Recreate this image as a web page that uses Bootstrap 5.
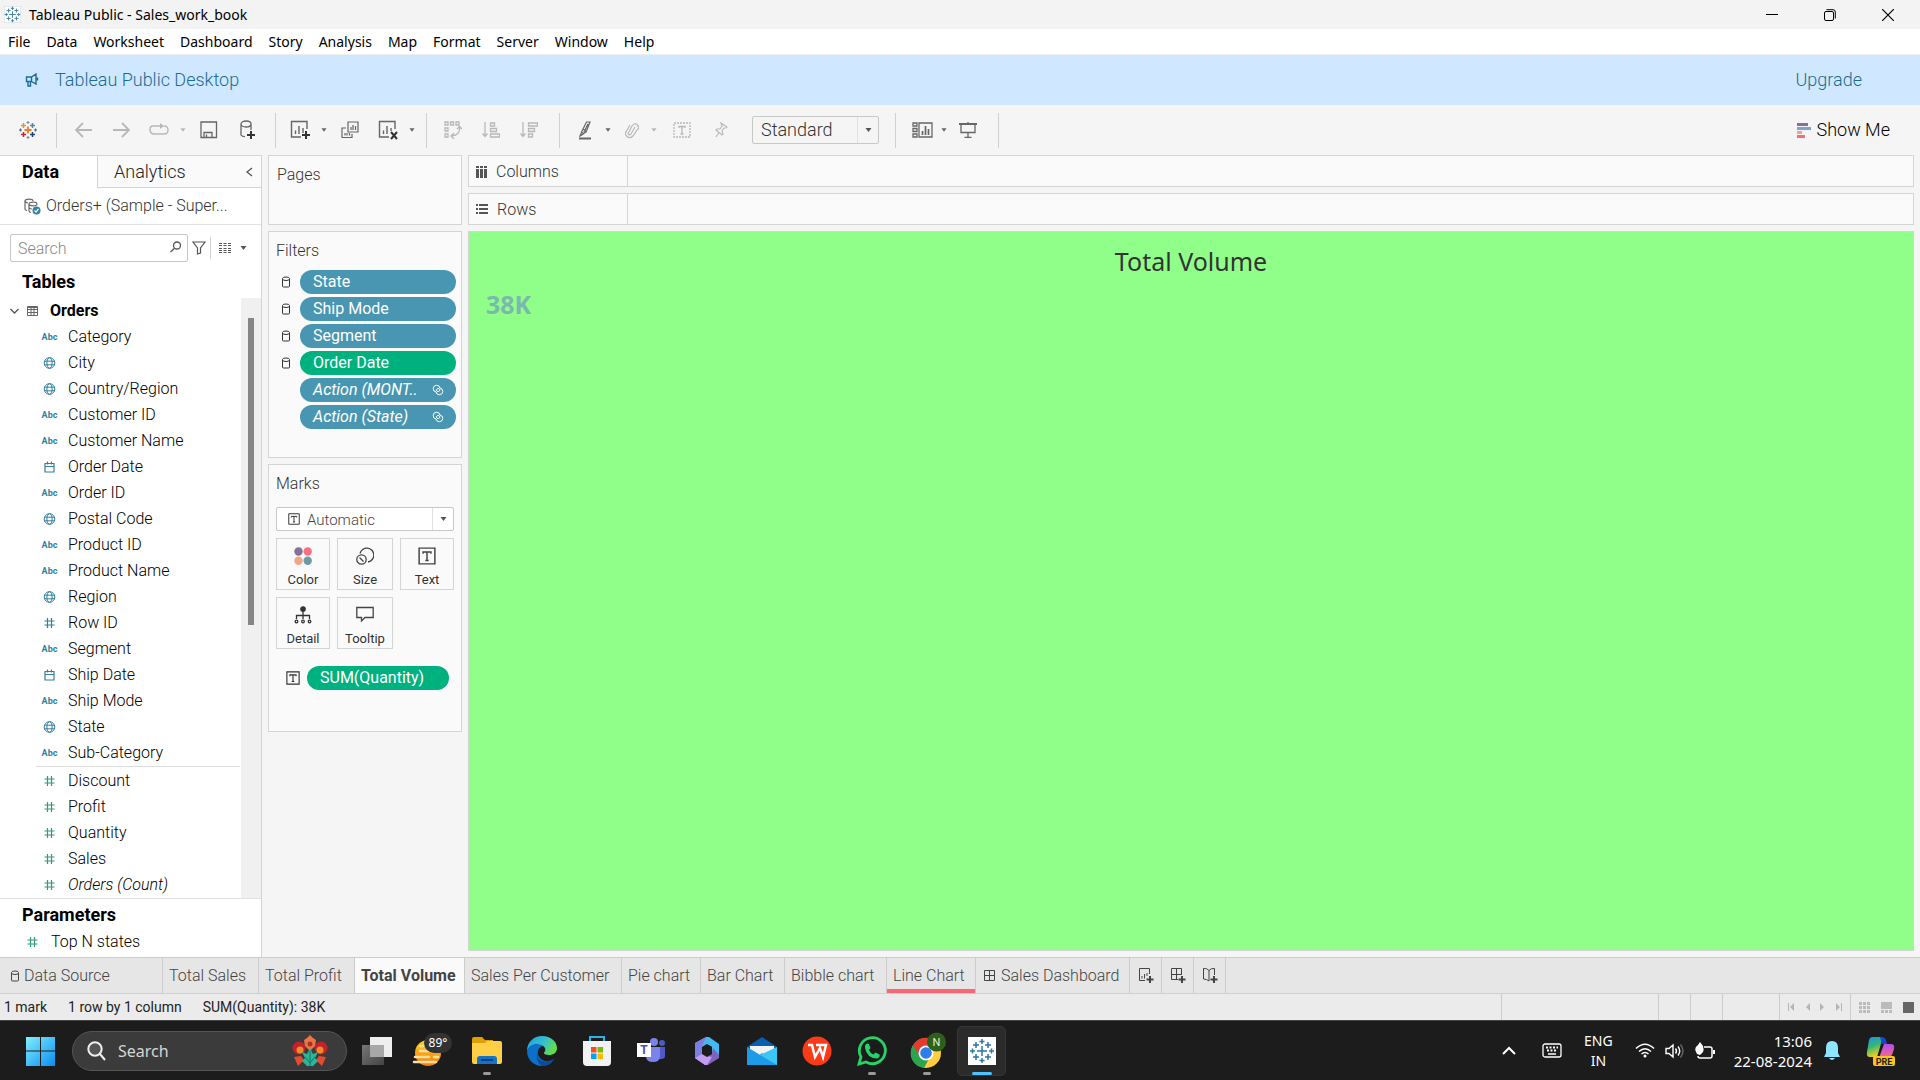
<!DOCTYPE html>
<html lang="en">
<head>
<meta charset="utf-8">
<meta name="viewport" content="width=device-width, initial-scale=1">
<title>Tableau Public - Sales_work_book</title>
<link rel="stylesheet" href="https://cdn.jsdelivr.net/npm/bootstrap@5.3.0/dist/css/bootstrap.min.css">
<style>
:root{--ui:"Roboto","Liberation Sans",sans-serif;--win:"Noto Sans","Open Sans",sans-serif;--line:#d4d4d4;--dim:#4996b2;--mea:#00b180}
body{font-family:var(--ui);font-size:16px;font-weight:300;line-height:24px;color:#000;background:#f5f5f5;min-height:100vh;overflow-x:hidden}
button,input,select{font-family:inherit;font-weight:inherit;font-style:inherit;color:inherit}
button{background:none;border:0;padding:0}
a{text-decoration:none;color:inherit}
svg{display:block;flex:none}
h1,h2,h3{margin:0;line-height:inherit}
.winbar{background:#f3f3f3;height:29px;font:14px/28px var(--win);padding-right:3px}
.winbtn{width:58px;height:29px}
.menus{background:#fff;height:26px;border-bottom:1px solid #eee;font:14px/26px var(--win);gap:16px}
.banner{background:#cfe8ff;height:50px;color:#1b6d93;font-size:18px}
.tools{height:50px;color:#666}
.tgroup{gap:2px}
.tb{width:36px;height:36px;display:flex;align-items:center;justify-content:center}
.tb.tw{width:44px}
.tc{width:13px;height:36px;margin-left:-3px;display:flex;align-items:center;justify-content:center}
.off{color:#b8b8b8}
.rule{width:1px;height:35px;background:#d0d0d0}
.drop{position:relative}
.drop select{appearance:none;width:100%;height:100%;border:1px solid #c8c8c8;border-radius:2px;color:#333}
.drop .arr{position:absolute;right:0;top:1px;bottom:1px;width:22px;border-left:1px solid #e0e0e0;display:flex;align-items:center;justify-content:center;pointer-events:none;color:#555}
.fit{width:127px;height:28px}.fit select{background:#f5f5f5;font-size:18px;padding:0 0 0 8px}
.marktype{height:24px}.marktype select{background:#fff;font-size:15px;color:#444;padding:0 0 0 30px}
.marktype>svg{position:absolute;left:12px;top:6px;pointer-events:none}
.showme{font-size:18px;margin-right:30px;gap:6px}
.datapane{width:262px;background:#fff;border-right:1px solid var(--line);border-top:1px solid var(--line)}
.ptab{height:32px;font-size:18px}
.ptab.cur{width:97px;font-weight:700;color:#000;padding:0 0 0 22px}
.ptab.alt{background:#fafafa;border-left:1px solid var(--line);border-bottom:1px solid var(--line);color:#222}
.src{height:37px;border-bottom:1px solid #e2e2e2;color:#333}
.findrow{padding:9px 10px 0;gap:4px}
.find{width:178px;height:28px;position:relative}
.find input{width:100%;height:100%;border:1px solid #c8c8c8;border-radius:2px;padding:0 28px 0 7px;outline:0}
.find input::placeholder{color:#888;opacity:1}
.find svg{position:absolute;right:6px;top:7px;color:#555}
.sec{font-size:18px;font-weight:700;padding-left:22px}
.fields{list-style:none;margin:0;padding:0}
.fields li{height:26px;padding-left:41px;display:flex;align-items:center;line-height:26px}
.fields svg,.abc{margin-right:10px;color:#337f9f}
.abc{width:17px;font-size:9px;font-weight:700;line-height:12px;text-align:center;flex:none}
.fields .m svg{color:#2f9c76}
.split{height:1px;background:#ddd;margin:0 -3px 1px 36px}
.fields .param{height:30px;padding-left:24px}
.track{width:20px;background:#f0f0f0}
.thumb{width:6px;height:307px;background:#868686}
.shelfcol{width:194px}
.pane{background:#fafafa;border:1px solid var(--line);color:#333}
.ptitle{padding-top:3px}
.pill{height:24px;border:0;border-radius:12px;background:var(--dim);color:#fff;font-weight:400;line-height:24px;padding:0 12px 0 13px;display:flex;align-items:center;justify-content:space-between}
.pill.g{background:var(--mea)}
.frow{display:grid;grid-template-columns:24px 156px;height:24px;align-items:center}
.frow>svg{margin-left:5px}
.mbtns{display:grid;grid-template-columns:54px 56px 54px;gap:7px}
.mbtn{height:52px;border:1px solid var(--line);background:#fafafa;font-size:13px;font-weight:400;line-height:18px;color:#333;display:flex;flex-direction:column;align-items:center;padding-top:8px}
.mbtn svg{margin-bottom:6px}
.shelf{height:32px}
.shelfname{width:159px;border-right:1px solid var(--line);gap:9px;padding:2px 0 0 7px}
.viz{background:#8fff8a;border:1px solid var(--line)}
.viz h1{font:25px/34px "Noto Sans",sans-serif;color:#333;text-align:center}
.big{font:bold 25px/32px "Noto Sans",sans-serif;color:#7bb8ad;padding:10px 0 0 1px}
.sheets{height:37px;background:#e6e6e6;border-top:1px solid #ccc;border-bottom:1px solid #d0d0d0;color:#444}
.sheets button{border-right:1px solid #ccc;padding:0 6px;color:#444;text-align:left;white-space:nowrap}
.sheets .cur{background:#fafafa;font-weight:700}
.sheets .red{box-shadow:inset 0 -4px #fb6574}
.sheets .new{width:32px;display:flex;align-items:center;justify-content:center}
.status{height:26px;background:#ebebeb;font-size:14px;font-weight:400;line-height:26px;color:#222}
.facts{gap:21px}
.cell{border-left:1px solid #ccc;height:26px}
.task{height:60px;background:#1c1c1c;border-top:1px solid #444;color:#fff;font:14px/20px var(--win)}
.tsearch{width:275px;height:40px;border-radius:20px;background:#3b3b3b;border:1px solid #555;color:#d8d8d8}
.tsearch input{background:none;border:0;outline:0;width:150px;font-size:16px}
.tsearch input::placeholder{color:#d5d5d5;opacity:1}
.app{width:55px;height:50px;display:flex;align-items:center;justify-content:center;position:relative}
.app.start{width:64px;margin-left:8px}
.app.run::after{content:"";position:absolute;bottom:1px;width:8px;height:3px;border-radius:2px;background:#9a9a9a}
.app.on::before{content:"";position:absolute;inset:0 3px;background:#2b2b2b;border:1px solid #363636;border-radius:5px}
.app.on svg{position:relative}
.app.on::after{width:20px;background:#4cc2ff}
.tray{gap:10px;padding-right:24px}
.clock{font-size:15px;margin:0 2px 0 8px}
</style>
<script src="https://cdn.jsdelivr.net/npm/bootstrap@5.3.0/dist/js/bootstrap.bundle.min.js"></script>
</head>
<body class="d-flex flex-column">
<svg width="0" height="0" class="position-absolute" aria-hidden="true">
<symbol id="i-globe" viewBox="0 0 17 12"><g fill="none" stroke="currentColor"><circle cx="8.500" cy="6" r="5.300"/><ellipse cx="8.500" cy="6" rx="2.600" ry="5.300"/><path d="M3.500 4.200h10M3.500 7.800h10"/></g></symbol>
<symbol id="i-cal" viewBox="0 0 17 12"><path d="M4 2.500h9v8.500H4zM4 5.500h9M6.500 0.500v3M10.500 0.500v3" fill="none" stroke="currentColor" stroke-width="1.200"/></symbol>
<symbol id="i-num" viewBox="0 0 17 12"><path d="M6.500 1v10M10.500 1v10M3.500 4h10M3.500 8h10" fill="none" stroke="currentColor" stroke-width="1.200"/></symbol>
<symbol id="i-car" viewBox="0 0 7 4"><path d="M0.500 0h6L3.500 4z" fill="currentColor"/></symbol>
<symbol id="i-db" viewBox="0 0 10 12"><path d="M1.500 2.500q0-1.500 3.500-1.500t3.500 1.500v7.500q0 1-1 1h-5q-1 0-1-1zM1.500 3q0 1.500 3.500 1.500t3.500-1.500" fill="none" stroke="currentColor"/></symbol>
<symbol id="i-t" viewBox="0 0 16 16"><path d="M1 1h14v14H1z" fill="none" stroke="currentColor" stroke-width="1.300"/><path d="M4.500 6V4.500h7V6M8 4.500v7.500M6.500 12h3" fill="none" stroke="currentColor" stroke-width="1.300"/></symbol>
<symbol id="i-link" viewBox="0 0 12 12"><path d="M4.200 8A3.400 3.400 0 1 1 8 4.300M8 4A3.400 3.400 0 1 1 4 8M4.200 6l2-2 2 2-2 2z" fill="none" stroke="currentColor"/></symbol>
<symbol id="i-tab" viewBox="0 0 26 26"><path d="M13 8v10M8 13h10M13 1v5M10.500 3.500h5M13 20v5M10.500 22.500h5M3.500 10.500v5M1 13h5M22.500 10.500v5M20 13h5M7 4v6M4 7h6M19 4v6M16 7h6M7 16v6M4 19h6M19 16v6M16 19h6" fill="none" stroke="currentColor" stroke-width="1.500"/></symbol>
</svg>

<header>
<div class="winbar d-flex align-items-center">
<div class="d-flex align-items-center flex-grow-1 ps-1"><svg width="17" height="17" viewBox="0 0 26 26" style="color:#3e86ac"><path d="M0 0h26v26H0z" fill="#fff" stroke="#bbb"/><use href="#i-tab"/></svg><span class="ps-2">Tableau Public - Sales_work_book</span></div>
<button class="winbtn" aria-label="Minimize"><svg class="mx-auto" width="12" height="12"><path d="M0 5.500h12" stroke="#000"/></svg></button>
<button class="winbtn" aria-label="Restore"><svg class="mx-auto" width="12" height="12" fill="none" stroke="#000"><rect x="0.500" y="2.500" width="9" height="9" rx="1.500"/><path d="M2.500.7H9q2.300 0 2.300 2.300v6.500"/></svg></button>
<button class="winbtn" aria-label="Close"><svg class="mx-auto" width="12" height="12"><path d="M0 0l12 12M12 0L0 12" stroke="#000" stroke-width="1.200"/></svg></button>
</div>
<nav class="menus d-flex ps-2"><a href="#">File</a><a href="#">Data</a><a href="#">Worksheet</a><a href="#">Dashboard</a><a href="#">Story</a><a href="#">Analysis</a><a href="#">Map</a><a href="#">Format</a><a href="#">Server</a><a href="#">Window</a><a href="#">Help</a></nav>
<div class="banner d-flex align-items-center justify-content-between">
<div class="d-flex align-items-center"><svg class="ms-4 me-3" width="15" height="14" fill="none" stroke="currentColor" stroke-width="1.400"><path d="M2.500 4h5L12 1v10L7.500 8.500h-5zM7.500 4v4.500M4 8.500V13h2.500V8.500M13.500 4.500v3"/></svg><span>Tableau Public Desktop</span></div>
<a href="#" class="me-5" style="padding-right:10px">Upgrade</a>
</div>
<div class="tools d-flex align-items-center" role="toolbar">
<button class="tb ms-2 me-2" aria-label="Start page"><svg class="ms-1" width="18" height="20" viewBox="0 0 18 20" fill="none" stroke-width="1.500"><path d="M9 6.500v7M5.500 10h7" stroke="#eb7a2c" stroke-width="1.800"/><path d="M4.500 3v5M2 5.500h5" stroke="#eb912c"/><path d="M13.500 3v5M11 5.500h5" stroke="#59879b"/><path d="M4.500 12v5M2 14.500h5" stroke="#c72035"/><path d="M13.500 12v5M11 14.500h5" stroke="#1f447e"/><path d="M9 1v3M7.500 2.500h3M9 16v3M7.500 17.500h3" stroke="#7099a6" stroke-width="1.200"/><path d="M1.500 8.500v3M0 10h3M16.500 8.500v3M15 10h3" stroke="#5b6591" stroke-width="1.200"/></svg></button>
<div class="rule ms-1"></div>
<div class="tgroup d-flex ms-2 off" style="margin-right:10px">
<button class="tb" aria-label="Back"><svg width="17" height="16" fill="none" stroke="currentColor" stroke-width="1.800"><path d="M17 8H1M8 1L1 8l7 7"/></svg></button>
<button class="tb" aria-label="Forward"><svg width="17" height="16" fill="none" stroke="currentColor" stroke-width="1.800"><path d="M0 8h16M9 1l7 7-7 7"/></svg></button>
<button class="tb" aria-label="Replay"><svg width="20" height="14" fill="none" stroke="currentColor" stroke-width="1.400"><path d="M12 3H4Q1 3 1 6.500T4 11h11q4 0 4-4t-4-4"/><path d="M11 0l4 3-4 3z" fill="currentColor" stroke="none"/></svg></button><button class="tc" aria-label="Replay options"><svg width="6" height="4"><use href="#i-car"/></svg></button>
<button class="tb" aria-label="Save" style="color:#666"><svg width="18" height="18" fill="none" stroke="currentColor" stroke-width="1.300"><path d="M1 1h15.500v15.500H1zM4 16.500v-5h8v5M6.500 13.500v3"/></svg></button>
<button class="tb" aria-label="New data source" style="color:#666"><svg width="17" height="20" fill="none" stroke="currentColor" stroke-width="1.300"><path d="M2 4c0-4 10-4 10 0s-10 4-10 0v11q1 1.500 4 1.700M12 4v6"/><path d="M12 11v8M8 15h8" stroke="#333" stroke-width="2"/></svg></button>
</div>
<div class="rule"></div>
<div class="tgroup d-flex me-2" style="margin-left:6px">
<button class="tb" aria-label="New worksheet"><svg width="20" height="20" fill="none" stroke="currentColor" stroke-width="1.400"><path d="M17 9V1.500H1.500v15.500H11M5.500 10.500v3.500M9 6v8M13 8v5"/><path d="M16 11v8M12 15h8" stroke="#333" stroke-width="2"/></svg></button><button class="tc" aria-label="New worksheet options"><svg width="6" height="4"><use href="#i-car"/></svg></button>
<button class="tb" aria-label="Duplicate"><svg width="18" height="18" fill="none" stroke="currentColor" stroke-width="1.200"><path d="M7 1h10v10H7zM5 7H1v9.500h10V13M10 6v3M12 4v5M14.500 5v4M4 12v2.500M6 12v2.500M8.500 12v2.500"/></svg></button>
<button class="tb" aria-label="Clear sheet"><svg width="20" height="20" fill="none" stroke="currentColor" stroke-width="1.400"><path d="M17 9V1.500H1.500v15.500H11M5.500 10.500v3.500M9 6v8M13 8v3"/><path d="M13 12l6 7M19 12l-6 7" stroke="#333" stroke-width="2"/></svg></button><button class="tc" aria-label="Clear options"><svg width="6" height="4"><use href="#i-car"/></svg></button>
</div>
<div class="rule"></div>
<div class="tgroup d-flex ms-2 me-2 pe-1 off">
<button class="tb" aria-label="Swap rows and columns"><svg width="18" height="18" fill="none" stroke="currentColor" stroke-width="1.300"><path d="M1 1h3v3H1zM6.500 1h3v3h-3zM12 1h3v3h-3zM1 7h3v3H1zM1 13h3v3H1zM15.500 6q1 8-8 9M13 8l2.500-2.500L18 8M10 12l-3 3 3 3"/></svg></button>
<button class="tb" aria-label="Sort ascending"><svg width="18" height="16" fill="none" stroke="currentColor" stroke-width="1.300"><path d="M3 0v14M0.500 11.500L3 14.500l2.500-3M8.500 1h4v3h-4zM8.500 6.500h6v3h-6zM8.500 12h9v3h-9z"/></svg></button>
<button class="tb" aria-label="Sort descending"><svg width="18" height="16" fill="none" stroke="currentColor" stroke-width="1.300"><path d="M3 0v14M0.500 11.500L3 14.500l2.500-3M8.500 1h9v3h-9zM8.500 6.500h6v3h-6zM8.500 12h4v3h-4z"/></svg></button>
</div>
<div class="rule"></div>
<div class="d-flex ms-2 me-2">
<button class="tb" aria-label="Highlight"><svg width="14" height="19" fill="none" stroke="currentColor" stroke-width="1.200"><path d="M7.500 1h3.500l-4 10-2.500 1.500-2-1.500zM4 8.500l3.500 1.500M2.500 11.500L1 15l3.500-2M5 11l4-8"/><path d="M0 17.500h12" stroke-width="2"/></svg></button><button class="tc" aria-label="Highlight options"><svg width="6" height="4"><use href="#i-car"/></svg></button>
<button class="tb off" aria-label="Group members"><svg width="14" height="17" fill="none" stroke="currentColor" stroke-width="1.200"><path d="M10 5L6 12q-2 2-3-.5L7 4q3-4 5.500-1T12 8l-4 6q-3 3-6 .5T1.500 9L5 3"/></svg></button><button class="tc off" aria-label="Group options"><svg width="6" height="4"><use href="#i-car"/></svg></button>
<button class="tb tw off" aria-label="Show mark labels"><svg width="18" height="16" fill="none" stroke="currentColor" stroke-width="1.300"><path d="M1 1h16v14H1z" stroke-dasharray="2 1"/><path d="M6 6V4.500h6V6M9 4.500v7.500M7.500 12h3"/></svg></button>
<button class="tb off" aria-label="Fix axes"><svg width="14" height="16" fill="none" stroke="currentColor" stroke-width="1.200"><path d="M6 1l6 4-1 1h-2l-2 3 1 3-1 1-6-5 1-1h3l2-3zM4 10.500L1 15"/></svg></button>
</div>
<div class="drop fit ms-1"><select aria-label="Fit"><option>Standard</option></select><span class="arr"><svg width="7" height="4"><use href="#i-car"/></svg></span></div>
<div class="rule ms-3"></div>
<div class="d-flex ms-2 me-2 pe-1">
<button class="tb" aria-label="Show cards"><svg width="21" height="16" fill="none" stroke="currentColor" stroke-width="1.300"><path d="M1 1h4v3H1zM1 6.500h4v3H1zM1 12h4v3H1zM7 1h13v14H7z"/><path d="M10.500 9v4M13.500 4v9M16.500 7v6" stroke-width="1.700"/></svg></button><button class="tc" aria-label="Card options"><svg width="6" height="4"><use href="#i-car"/></svg></button>
<button class="tb" aria-label="Presentation mode"><svg width="18" height="16" fill="none" stroke="currentColor" stroke-width="1.300"><path d="M0 2h18" stroke-width="2"/><path d="M2 2v8.500h14V2M9 0v2M9 10.500V15M5.500 15.300h7"/></svg></button>
</div>
<div class="rule"></div>
<button class="showme ms-auto d-flex align-items-center text-black"><svg width="14" height="15"><path d="M0 0h11v3H0z" fill="#83719b"/><path d="M0 4h14v3H0z" fill="#7fa3cc"/><path d="M0 8h5v3H0z" fill="#f0a77c"/><path d="M0 12h8v3H0z" fill="#f66e7c"/></svg>Show Me</button>
</div>
</header>

<main class="d-flex flex-grow-1">
<aside class="datapane d-flex flex-column">
<div class="d-flex"><button class="ptab cur text-start">Data</button><button class="ptab alt flex-grow-1 d-flex align-items-center justify-content-between ps-3 pe-2">Analytics<svg width="7" height="10" fill="none" stroke="#555" stroke-width="1.300"><path d="M6 1L1 5l5 4"/></svg></button></div>
<div class="src d-flex align-items-center ps-4"><svg width="17" height="17" style="margin-right:5px" fill="none" stroke="#666" stroke-width="1.200"><path d="M1 3c0-2.500 8-2.500 8 0M1 3v8q0 1 2 1.500M5 6c0-2.500 8-2.500 8 0s-8 2.500-8 0v7q0 1 2 1.500M1 3q1 2 3 2M5 9.500q1 1.500 3 1.500"/><circle cx="12.500" cy="12.500" r="4" fill="#2f83a5" stroke="none"/><path d="M10.500 12.500l1.500 1.500 2.500-3" stroke="#fff"/></svg><span>Orders+ (Sample - Super...</span></div>
<div class="findrow d-flex align-items-center">
<div class="find"><input type="search" placeholder="Search" aria-label="Search fields"><svg width="12" height="12" fill="none" stroke="currentColor" stroke-width="1.300"><circle cx="7" cy="4.500" r="3.500"/><path d="M4.500 7.200L0.500 11"/></svg></div>
<button aria-label="Filter fields"><svg width="14" height="14" fill="none" stroke="#555" stroke-width="1.200"><path d="M1 1h12L8.500 7v5L5.500 13V7z"/></svg></button>
<div class="rule" style="height:22px"></div>
<button class="d-flex align-items-center ms-1" aria-label="View options" style="gap:9px;color:#555"><svg width="12" height="10" stroke="currentColor"><path d="M0 .5h12M0 2.500h12M0 5.500h12M0 7.500h12M0 9.500h12" stroke-dasharray="3 1.500"/></svg><svg width="7" height="4"><use href="#i-car"/></svg></button>
</div>
<h2 class="sec pt-2">Tables</h2>
<div class="d-flex pt-1 flex-grow-1">
<div class="flex-grow-1 pe-1">
<div class="d-flex align-items-center ps-2 fw-bold" style="height:26px"><svg width="12" height="8" style="margin-right:7px" fill="none" stroke="#555" stroke-width="1.300"><path d="M2.500 2l4 4 4-4"/></svg><svg width="11" height="10" fill="none" stroke="#666" style="margin-right:12px"><path d="M.5.500h10v9H.5zM.5 3.500h10M.5 6.500h10M4 1v9M7 1v9M.5 1.500h10"/></svg>Orders</div>
<ul class="fields">
<li><span class="abc">Abc</span>Category</li>
<li><svg width="17" height="12"><use href="#i-globe"/></svg>City</li>
<li><svg width="17" height="12"><use href="#i-globe"/></svg>Country/Region</li>
<li><span class="abc">Abc</span>Customer ID</li>
<li><span class="abc">Abc</span>Customer Name</li>
<li><svg width="17" height="12"><use href="#i-cal"/></svg>Order Date</li>
<li><span class="abc">Abc</span>Order ID</li>
<li><svg width="17" height="12"><use href="#i-globe"/></svg>Postal Code</li>
<li><span class="abc">Abc</span>Product ID</li>
<li><span class="abc">Abc</span>Product Name</li>
<li><svg width="17" height="12"><use href="#i-globe"/></svg>Region</li>
<li><svg width="17" height="12"><use href="#i-num"/></svg>Row ID</li>
<li><span class="abc">Abc</span>Segment</li>
<li><svg width="17" height="12"><use href="#i-cal"/></svg>Ship Date</li>
<li><span class="abc">Abc</span>Ship Mode</li>
<li><svg width="17" height="12"><use href="#i-globe"/></svg>State</li>
<li><span class="abc">Abc</span>Sub-Category</li>
</ul>
<div class="split"></div>
<ul class="fields">
<li class="m"><svg width="17" height="12"><use href="#i-num"/></svg>Discount</li>
<li class="m"><svg width="17" height="12"><use href="#i-num"/></svg>Profit</li>
<li class="m"><svg width="17" height="12"><use href="#i-num"/></svg>Quantity</li>
<li class="m"><svg width="17" height="12"><use href="#i-num"/></svg>Sales</li>
<li class="m fst-italic"><svg width="17" height="12"><use href="#i-num"/></svg>Orders (Count)</li>
</ul>
</div>
<div class="track d-flex justify-content-center pt-3"><div class="thumb mt-1"></div></div>
</div>
<div class="border-top">
<h2 class="sec pt-1">Parameters</h2>
<ul class="fields"><li class="m param"><svg width="17" height="12"><use href="#i-num"/></svg>Top N states</li></ul>
</div>
</aside>

<div class="d-flex flex-grow-1 align-items-stretch" style="gap:6px;padding:0 6px 6px">
<div class="shelfcol d-flex flex-column flex-shrink-0" style="gap:6px">
<section class="pane px-2 pt-1" style="height:70px"><div class="ptitle">Pages</div></section>
<section class="pane pt-1" style="height:227px;padding-left:7px">
<div class="ptitle" style="padding-bottom:7px">Filters</div>
<div class="d-grid" style="gap:3px">
<div class="frow"><svg width="10" height="12"><use href="#i-db"/></svg><button class="pill">State</button></div>
<div class="frow"><svg width="10" height="12"><use href="#i-db"/></svg><button class="pill">Ship Mode</button></div>
<div class="frow"><svg width="10" height="12"><use href="#i-db"/></svg><button class="pill">Segment</button></div>
<div class="frow"><svg width="10" height="12"><use href="#i-db"/></svg><button class="pill g">Order Date</button></div>
<div class="frow fst-italic"><span></span><button class="pill">Action (MONT..<svg width="12" height="12"><use href="#i-link"/></svg></button></div>
<div class="frow fst-italic"><span></span><button class="pill">Action (State)<svg width="12" height="12"><use href="#i-link"/></svg></button></div>
</div>
</section>
<section class="pane pt-1" style="height:268px;padding-left:7px;padding-right:7px">
<div class="ptitle" style="padding-bottom:11px">Marks</div>
<div class="drop marktype" style="margin-bottom:7px"><svg width="12" height="12"><use href="#i-t"/></svg><select aria-label="Mark type"><option>Automatic</option></select><span class="arr"><svg width="7" height="4"><use href="#i-car"/></svg></span></div>
<div class="mbtns">
<button class="mbtn"><svg width="18" height="18"><circle cx="4.500" cy="4.500" r="4.200" fill="#83719b"/><circle cx="13.700" cy="4.500" r="4.200" fill="#fb6e80"/><circle cx="4.500" cy="13.700" r="4.200" fill="#f3a683"/><circle cx="13.700" cy="13.700" r="4.200" fill="#6f98a5"/></svg>Color</button>
<button class="mbtn"><svg width="18" height="18" fill="none" stroke="#444" stroke-width="1.300"><path d="M4 6.500A7 7 0 1 1 12 15"/><circle cx="5.500" cy="12.500" r="4.700"/><path d="M3.500 10.500l4 4"/></svg>Size</button>
<button class="mbtn"><svg width="18" height="18" color="#444"><use href="#i-t"/></svg>Text</button>
<button class="mbtn"><svg width="18" height="18" fill="none" stroke="#333" stroke-width="1.300"><circle cx="9" cy="3" r="2.200" fill="#333"/><path d="M9 4v9M2.500 13V9.500h13V13"/><circle cx="2.500" cy="15.500" r="1.300"/><circle cx="9" cy="15.500" r="1.300"/><circle cx="15.500" cy="15.500" r="1.300"/></svg>Detail</button>
<button class="mbtn"><svg width="18" height="18" fill="none" stroke="#444" stroke-width="1.300"><path d="M.8 1.500h16.400v10H9L5.500 15v-3.500H.8z"/></svg>Tooltip</button>
</div>
<div class="d-flex align-items-center" style="padding:17px 0 0 10px;gap:7px"><svg width="14" height="14"><use href="#i-t"/></svg><button class="pill g" style="width:142px">SUM(Quantity)</button></div>
</section>
</div>
<div class="d-flex flex-column flex-grow-1" style="gap:6px">
<div class="pane shelf d-flex"><div class="shelfname d-flex align-items-center"><svg width="11" height="13" fill="#555"><path d="M0 0h3v2H0zM4 0h3v2H4zM8 0h3v2H8zM0 3h3v9H0zM4 3h3v9H4zM8 3h3v9H8z"/></svg>Columns</div></div>
<div class="pane shelf d-flex"><div class="shelfname d-flex align-items-center"><svg width="12" height="13" fill="#555"><path d="M0 0h2v2H0zM3 0h9v2H3zM0 4h2v2H0zM3 4h9v2H3zM0 8h2v2H0zM3 8h9v2H3z"/></svg>Rows</div></div>
<section class="viz flex-grow-1 px-3 pt-2"><h1 class="pt-1">Total Volume</h1><div class="big">38K</div></section>
</div>
</div>
</main>

<footer>
<div class="sheets d-flex align-items-stretch">
<button class="d-flex align-items-center gap-1" style="width:163px;padding-left:10px"><svg width="10" height="12"><use href="#i-db"/></svg>Data Source</button>
<button style="width:96px">Total Sales</button><button style="width:96px">Total Profit</button><button class="cur" style="width:110px">Total Volume</button><button style="width:157px">Sales Per Customer</button><button style="width:79px">Pie chart</button><button style="width:84px">Bar Chart</button><button style="width:102px">Bibble chart</button><button style="width:89px" class="red">Line Chart</button>
<button class="d-flex align-items-center" style="width:154px;gap:5px;padding-left:8px"><svg width="12" height="12" fill="none" stroke="currentColor"><path d="M.5.500h10v10H.5zM5.500.500v10M.5 5.500h10"/></svg>Sales Dashboard</button>
<button class="new" aria-label="New worksheet"><svg width="16" height="16" fill="none" stroke="currentColor"><path d="M11.500 6V.500h-10v12H7M4 8v2.500M6.500 6v4.500M9 5v3"/><path d="M12 8v7M8.500 11.500h7" stroke-width="2"/></svg></button><button class="new" aria-label="New dashboard"><svg width="16" height="16" fill="none" stroke="currentColor"><path d="M11.500 7V.500h-10v11H8M6.500.500v11M1.500 6.500h10"/><path d="M12 8v7M8.500 11.500h7" stroke-width="2"/></svg></button><button class="new" aria-label="New story"><svg width="16" height="16" fill="none" stroke="currentColor"><path d="M12.500 7V.500Q9 0 7 2.500 5 0 1.500.500v10.500q3 0 5.500 2V2.500"/><path d="M12 8v7M8.500 11.500h7" stroke-width="2"/></svg></button>
</div>
<div class="status d-flex"><div class="facts d-flex ps-1"><span>1 mark</span><span>1 row by 1 column</span><span>SUM(Quantity): 38K</span></div>
<div class="ms-auto cell" style="width:157px"></div><div class="cell" style="width:32px"></div><div class="cell" style="width:32px"></div><div class="cell" style="width:57px"></div>
<div class="cell d-flex align-items-center justify-content-around" style="width:71px;padding:0 3px"><svg width="7" height="8" fill="#b5b5b5"><path d="M0 0h1v8H0zM6 0v8L2 4z"/></svg><svg width="5" height="8" fill="#b5b5b5"><path d="M5 0v8L1 4z"/></svg><svg width="5" height="8" fill="#b5b5b5"><path d="M0 0v8l4-4z"/></svg><svg width="7" height="8" fill="#b5b5b5"><path d="M6 0h1v8H6zM1 0v8l4-4z"/></svg></div>
<div class="cell d-flex align-items-center" style="width:70px;gap:11px;padding-left:8px"><svg width="11" height="11" fill="#bbb"><path d="M0 0h3v3H0zM4 0h3v3H4zM8 0h3v3H8zM0 4h3v3H0zM4 4h3v3H4zM8 4h3v3H8zM0 8h3v3H0zM4 8h3v3H4zM8 8h3v3H8z"/></svg><svg width="11" height="11" fill="#bbb"><path d="M0 0h11v7H0zM0 8h3v3H0zM4 8h3v3H4zM8 8h3v3H8z"/></svg><svg width="11" height="11" fill="#666"><path d="M0 0h11v11H0z"/></svg></div>
</div>
<div class="task d-flex align-items-center">
<button class="app start" aria-label="Start"><svg width="30" height="30"><defs><linearGradient id="w" x2="1" y2="1"><stop stop-color="#82efff"/><stop offset="1" stop-color="#0a8cf0"/></linearGradient></defs><path d="M1 1h14v13.500H1zM16 1h14v13.500H16zM1 15.500h14V30H1zM16 15.500h14V30H16z" fill="url(#w)"/></svg></button>
<div class="tsearch d-flex align-items-center" style="padding:0 18px 0 14px"><svg width="19" height="20" fill="#555" stroke="#eee" stroke-width="2"><circle cx="8" cy="8" r="6.700"/><path d="M13 13l5 6"/></svg><input type="search" placeholder="Search" aria-label="Search Windows" class="ps-2 ms-1 me-auto">
<svg width="36" height="32" viewBox="0 0 36 32"><circle cx="7" cy="13" r="6.500" fill="#c3222a"/><circle cx="29" cy="13" r="6.500" fill="#c3222a"/><circle cx="8" cy="15" r="3.500" fill="#f08a2a"/><circle cx="28" cy="15" r="3.500" fill="#f08a2a"/><path d="M12 5l3-2 3-3 3 3 3 2-1 6-5 5-5-5z" fill="#ef7444"/><circle cx="18" cy="9" r="2.500" fill="#a5352a"/><path d="M2 22l7-1 3 4-6 6zM34 22l-7-1-3 4 6 6z" fill="#e74a2c"/><path d="M18 13l3 6 5-2-3 6 3 3-5 5h-6l-5-5 3-3-3-6 5 2z" fill="#2bb59a"/><path d="M18 16v15M13 22l5 6 5-6" stroke="#12796b" fill="none"/></svg></div>
<div class="d-flex" style="margin-left:2px">
<button class="app" aria-label="Task view"><svg width="30" height="28"><defs><linearGradient id="g1" x2="1" y2="1"><stop stop-color="#777"/><stop offset="1" stop-color="#444"/></linearGradient></defs><path d="M8 0h22v20H8z" fill="#eee"/><path d="M0 8h22v20H0z" fill="url(#g1)"/><path d="M8 8h14v12H8z" fill="#a8a8a8"/></svg></button>
<button class="app" aria-label="Weather"><svg width="40" height="36" viewBox="0 0 40 36"><defs><linearGradient id="sn" x2="0" y2="1"><stop stop-color="#ffd21f"/><stop offset="1" stop-color="#f37a0c"/></linearGradient></defs><circle cx="16" cy="20" r="13" fill="url(#sn)"/><path d="M8 18h10M3 24h14M22 24h4M2 29h22M8 13h5" stroke="#ffe0a0" stroke-width="2.500" stroke-linecap="round"/><rect x="12" y="0" width="28" height="20" rx="10" fill="#333"/><text x="26" y="14" font-family="Noto Sans" font-size="12" fill="#fff" text-anchor="middle">89°</text></svg></button>
<button class="app run" aria-label="File Explorer"><svg width="30" height="27"><path d="M0 2q0-2 2-2h8l3 3h8v8H0z" fill="#dfa007"/><path d="M0 6h13l2-2h13q2 0 2 2v19q0 2-2 2H2q-2 0-2-2z" fill="#ffcf45"/><path d="M5 27v-5q0-3 3-3h14q3 0 3 3v5z" fill="#1573c5"/><path d="M9 23h12" stroke="#083f83" stroke-width="2"/></svg></button>
<button class="app" aria-label="Edge"><svg width="30" height="30" viewBox="0 0 30 30"><defs><linearGradient id="e1" x2="1" y2=".4"><stop stop-color="#1f9ee5"/><stop offset=".6" stop-color="#35c1cf"/><stop offset="1" stop-color="#62dc4c"/></linearGradient></defs><path d="M15 0c9 0 15 6 15 12 0 5-4 7-8 7-3 0-5-1-5-2s2-2 1-5C16 8 4 6 0 15 0 6 7 0 15 0z" fill="url(#e1)"/><path d="M0 15C2 7 12 7 16 10c-6 1-7 9-2 13 4 3 9 3 13 0-3 5-7 7-12 7C6 30 0 23 0 15z" fill="#0c6fc9"/><path d="M10 17c0 8 7 11 17 6-3 5-7 7-12 7-4-2-6-8-5-13z" fill="#0a4b9d"/></svg></button>
<button class="app" aria-label="Microsoft Store"><svg width="30" height="30"><path d="M8 7V1h14v6" fill="none" stroke="#2bb1ef" stroke-width="2"/><path d="M1 5h28v21q0 4-4 4H5q-4 0-4-4z" fill="#f2f2f2"/><path d="M9 11h5.500v5.500H9z" fill="#f25022"/><path d="M15.500 11H21v5.500h-5.500z" fill="#7fba00"/><path d="M9 17.500h5.500V23H9z" fill="#00a4ef"/><path d="M15.500 17.500H21V23h-5.500z" fill="#ffb900"/></svg></button>
<button class="app" aria-label="Teams"><svg width="30" height="26"><circle cx="17" cy="4" r="4" fill="#7b83eb"/><circle cx="25" cy="5" r="3" fill="#5059c9"/><path d="M20 9h8v9q0 3-4 3h-4z" fill="#5059c9"/><path d="M9 9h14v9q0 6-7 6t-7-6z" fill="#7b83eb"/><path d="M0 5h14v14H0z" fill="#fff"/><text x="7" y="16" font-family="Roboto" font-weight="700" font-size="12" fill="#464eb8" text-anchor="middle">T</text></svg></button>
<button class="app" aria-label="Microsoft 365"><svg width="28" height="28"><path d="M13 0L2 6v15l7 5V11l8-4z" fill="#8f86e6"/><path d="M13 0h3l10 7v13l-7-3v-7l-6-3-4 3z" fill="#45b8f0"/><path d="M13 0L2 6v15l7-4V9z" fill="#7a7fe0"/><path d="M26 18v3l-11 7h-3L2 21l7-4 5 2 5-2 1-6z" fill="#7c63bd"/><path d="M2 21l7-4 5 2 5 1-5 8h-2z" fill="#c69bf2"/><path d="M9 10l5-3 5 3v7l-5 3-5-3z" fill="#1c1c1c"/></svg></button>
<button class="app" aria-label="Mail"><svg width="30" height="28"><path d="M0 10L15 0l15 10v18H0z" fill="#0a5eb0"/><path d="M3 9h24v10H3z" fill="#f2f2f2"/><path d="M0 10l15 9-15 9zM0 28l15-12 15 12z" fill="#1e9be6"/><path d="M30 10v18L13 18z" fill="#3bc7f5"/></svg></button>
<button class="app" aria-label="WPS Office"><svg width="30" height="30"><circle cx="15" cy="15" r="14.500" fill="#fb3a18"/><path d="M6 9h4l3 12 5-9 3 9 3-12H14" fill="none" stroke="#fff" stroke-width="2.500"/></svg></button>
<button class="app run" aria-label="WhatsApp"><svg width="30" height="30"><path d="M2 28l2-7A13 13 0 1 1 9 26z" fill="none" stroke="#25d366" stroke-width="2.800"/><path d="M9 8q2-1 3 0l1.500 4-1.500 2q1 3 4.500 4.500l2-2 4 2q1 3-3 4Q10 22 8 12q-.5-2 1-4z" fill="#25d366"/></svg></button>
<button class="app run" aria-label="Chrome"><svg width="38" height="38" viewBox="0 0 38 38"><circle cx="18" cy="21" r="15" fill="#ffcd40"/><path d="M5 13a15 15 0 0 0 11 23l6-11-4-4z" fill="#2ea44f"/><path d="M5 13.500A15 15 0 0 1 32 15H18l-6 9z" fill="#e33b2e"/><circle cx="18" cy="21" r="7.500" fill="#fff"/><circle cx="18" cy="21" r="5.800" fill="#2f7de9"/><circle cx="28.500" cy="10" r="9.500" fill="#2d6019"/><text x="28.500" y="14" font-family="Roboto" font-size="11" fill="#e0f0d8" text-anchor="middle">N</text></svg></button>
<button class="app run on" aria-label="Tableau"><svg width="28" height="28" viewBox="-1 -1 28 28" color="#2b78a3"><path d="M-1-1h28v28H-1z" fill="#fff"/><use href="#i-tab" width="26" height="26"/></svg></button>
</div>
<div class="tray d-flex align-items-center ms-auto">
<button aria-label="Show hidden icons"><svg width="14" height="9" fill="none" stroke="#fff" stroke-width="2"><path d="M1 8l6-6 6 6"/></svg></button>
<svg class="ms-3" width="20" height="15" fill="none" stroke="#fff" stroke-width="1.300"><rect x="1" y="1" width="18" height="13" rx="2"/><path d="M4 4.500h12M5 7.500h10" stroke-width="2" stroke-dasharray="2 1.500"/><path d="M6 11h8" stroke-width="1.500"/></svg>
<div class="text-center mx-2 ps-1 pe-1">ENG<br>IN</div>
<svg width="20" height="15" fill="none" stroke="#fff" stroke-width="1.600"><path d="M1 5.500q9-8.500 18 0M4 8.500q6-5.500 12 0M6.500 11q3.500-3 7 0"/><circle cx="10" cy="13" r="1.500" fill="#fff" stroke="none"/></svg>
<svg width="20" height="16" fill="none" stroke="#fff" stroke-width="1.400"><path d="M1 5.500h3L8 2v12l-4-3.500H1zM10.500 5.500q2 2.500 0 5M13 3.500q3.500 4.500 0 9"/><path d="M15.500 1.500q5 6.500 0 13" stroke="#666"/></svg>
<svg width="21" height="18" fill="none" stroke="#fff" stroke-width="1.500"><path d="M9 5h6q2 0 2 2v7q0 2-2 2H5q-2 0-2-2"/><path d="M18 8h2v4h-2z" fill="#fff" stroke="none"/><path d="M5 0q5 5 3 10l-3 3-3-1Q-2 6 3 3z" fill="#fff" stroke="none"/></svg>
<div class="clock text-end">13:06<br>22-08-2024</div>
<svg width="16" height="19" fill="#8fe4ff"><path d="M8 0q6 0 6 7v5l2 4H0l2-4V7q0-7 6-7zM5 17h6q-3 4-6 0z"/></svg>
<svg class="ms-3" width="30" height="30"><defs><linearGradient id="c1" x2=".3" y2="1"><stop stop-color="#1b93ea"/><stop offset=".5" stop-color="#33b579"/><stop offset="1" stop-color="#e8cf1c"/></linearGradient><linearGradient id="c2" x2="0" y2="1"><stop stop-color="#b64cf0"/><stop offset="1" stop-color="#fb6b7e"/></linearGradient></defs><path d="M6 1h11l-6 20H4q-4 0-3-5L3 4q1-3 3-3z" fill="url(#c1)"/><path d="M15 1q4 0 5 3l1 4h-5l-2-7z" fill="#1747cf"/><path d="M18 8h7q4 0 3 5l-2 6-3 3H13z" fill="url(#c2)"/><rect x="7" y="20" width="22" height="10" rx="2" fill="#ffc21a"/><text x="18" y="29" font-family="Roboto" font-weight="700" font-size="9" fill="#222" text-anchor="middle">PRE</text></svg>
</div>
</div>
</footer>
</body>
</html>
